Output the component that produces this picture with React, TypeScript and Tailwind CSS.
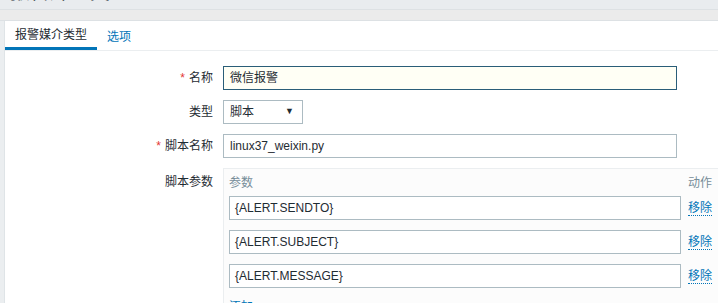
const font = { fontFamily: '"Liberation Sans", Arial, "Noto Sans CJK SC", sans-serif' }

const params = ['{ALERT.SENDTO}', '{ALERT.SUBJECT}', '{ALERT.MESSAGE}']

const Label = ({ text, required }: { text: string; required?: boolean }) => (
  <div className="flex h-[24px] items-center justify-end text-[12px] text-[#1f2c33]">
    {required && <span className="mr-[4px] text-[#e33734]">*</span>}
    {text}
  </div>
)

export default function App() {
  return (
    <div className="h-[303px] w-[718px] overflow-hidden bg-[#ebeef0]" style={font}>
      {/* page title, mostly scrolled out */}
      <div className="h-[9px] overflow-hidden bg-[#e9ecef] pl-[10px]">
        <div className="-mt-[18px] text-[20px] leading-[20px] text-[#1f2c33]">报警媒介类型</div>
      </div>
      <div className="h-[12px] border-y border-[#dde1e4] bg-[#ebebeb]" />

      <div className="ml-[4px] h-full border-l border-[#dfe4e7] bg-white">
        {/* tabs */}
        <div className="flex h-[30px] border-b border-[#ebeef0] text-[12px]">
          <div className="flex w-[92px] items-center justify-center border-b-[3px] border-[#0275b8] pt-[2px] text-[#1f2c33]">
            报警媒介类型
          </div>
          <div className="flex items-center px-[10px] pt-[2px] text-[#0275b8]">选项</div>
        </div>

        {/* form */}
        <div className="grid grid-cols-[208px_1fr] gap-x-[10px] gap-y-[10px] pt-[15px]">
          <Label text="名称" required />
          <div className="flex h-[24px] w-[454px] items-center border border-[#2a5d78] bg-[#fffff5] px-[6px] text-[12px] text-[#1f2c33]">
            微信报警
          </div>

          <Label text="类型" />
          <div className="flex h-[24px] w-[80px] items-center justify-between border border-[#acbbc2] bg-white pl-[6px] pr-[8px] text-[12px] text-[#1f2c33]">
            <span>脚本</span>
            <span className="text-[9px]">▼</span>
          </div>

          <Label text="脚本名称" required />
          <div className="flex h-[24px] w-[454px] items-center border border-[#acbbc2] bg-white px-[6px] text-[12px] text-[#1f2c33]">
            linux37_weixin.py
          </div>

          <div className="flex h-[24px] items-center justify-end pt-[4px] text-[12px] text-[#1f2c33]">脚本参数</div>
          <div className="mr-[-20px] border border-[#ebeef0] bg-[#fcfcfc] pl-[5px] pr-[25px]">
            <div className="flex h-[24px] items-center pt-[4px] text-[12px] text-[#768d99]">
              <span className="flex-1">参数</span>
              <span className="w-[24px]">动作</span>
            </div>
            <div className="flex flex-col gap-[10px] pt-[3px]">
              {params.map((p) => (
                <div key={p} className="flex items-center gap-[7px]">
                  <div className="flex h-[24px] flex-1 items-center border border-[#acbbc2] bg-white px-[5px] text-[12px] text-[#1f2c33]">
                    {p}
                  </div>
                  <span className="w-[24px] border-b border-dotted border-[#0275b8] text-[12px] leading-[14px] text-[#0275b8]">
                    移除
                  </span>
                </div>
              ))}
              <div className="pb-[10px] text-[12px] text-[#0275b8]">添加</div>
            </div>
          </div>
        </div>
      </div>
    </div>
  )
}
